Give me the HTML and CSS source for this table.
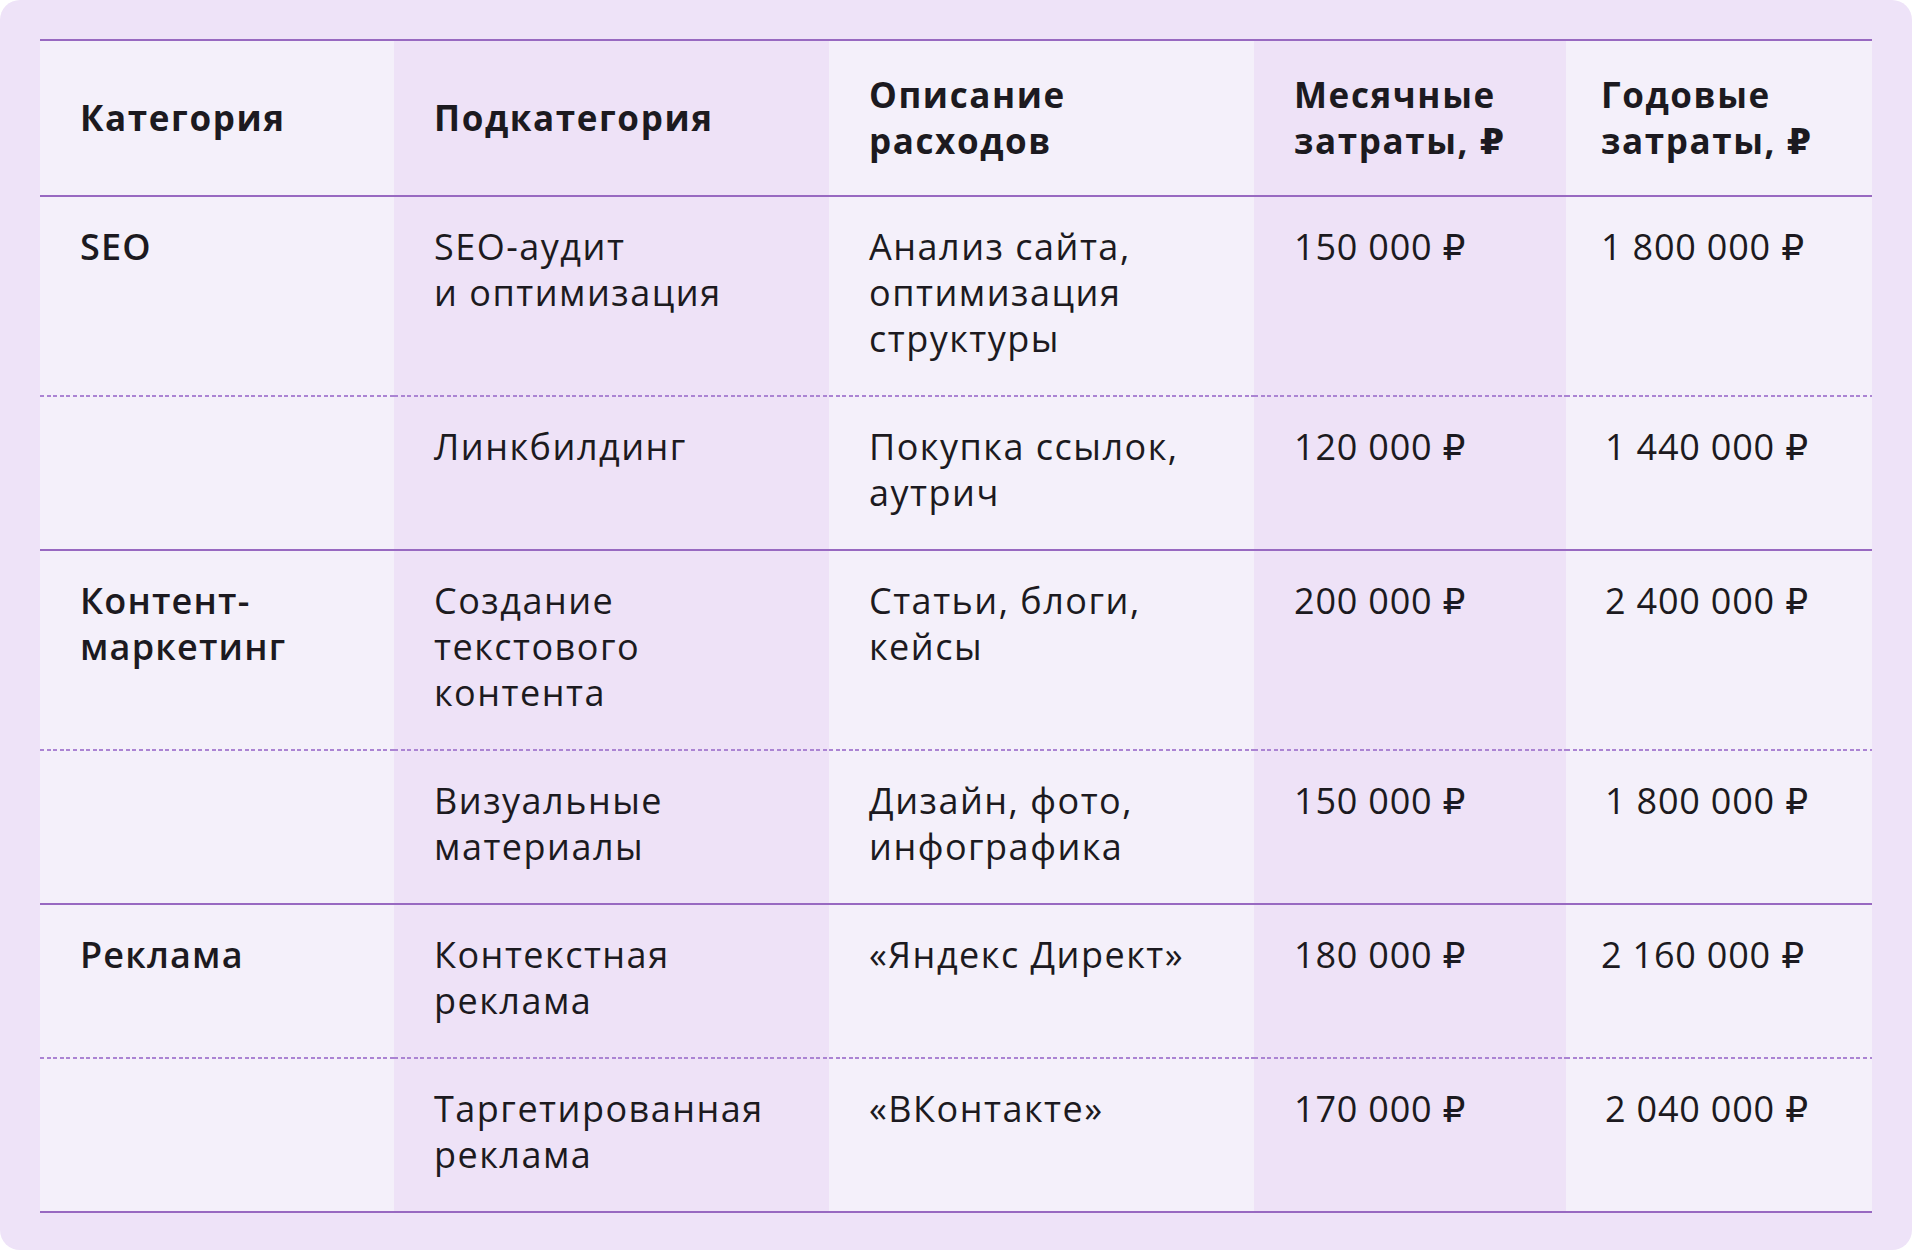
FILE: index.html
```html
<!DOCTYPE html>
<html lang="ru">
<head>
<meta charset="utf-8">
<title>Расходы</title>
<link rel="stylesheet" href="styles.css">
</head>
<body>
<div class="card">
  <div class="table">
    <div class="row head">
      <div class="cell c1">Категория</div>
      <div class="cell c2">Подкатегория</div>
      <div class="cell c3">Описание<br>расходов</div>
      <div class="cell c4">Месячные<br>затраты, ₽</div>
      <div class="cell c5">Годовые<br>затраты, ₽</div>
    </div>
    <div class="row sub">
      <div class="cell c1 cat">SEO</div>
      <div class="cell c2">SEO-аудит<br>и оптимизация</div>
      <div class="cell c3">Анализ сайта,<br>оптимизация<br>структуры</div>
      <div class="cell c4 num">150 000 ₽</div>
      <div class="cell c5 num">1 800 000 ₽</div>
    </div>
    <div class="row group">
      <div class="cell c1 cat"></div>
      <div class="cell c2">Линкбилдинг</div>
      <div class="cell c3">Покупка ссылок,<br>аутрич</div>
      <div class="cell c4 num">120 000 ₽</div>
      <div class="cell c5 num shift">1 440 000 ₽</div>
    </div>
    <div class="row sub">
      <div class="cell c1 cat">Контент-<br>маркетинг</div>
      <div class="cell c2">Создание<br>текстового<br>контента</div>
      <div class="cell c3">Статьи, блоги,<br>кейсы</div>
      <div class="cell c4 num">200 000 ₽</div>
      <div class="cell c5 num shift">2 400 000 ₽</div>
    </div>
    <div class="row group">
      <div class="cell c1 cat"></div>
      <div class="cell c2">Визуальные<br>материалы</div>
      <div class="cell c3">Дизайн, фото,<br>инфографика</div>
      <div class="cell c4 num">150 000 ₽</div>
      <div class="cell c5 num shift">1 800 000 ₽</div>
    </div>
    <div class="row sub">
      <div class="cell c1 cat">Реклама</div>
      <div class="cell c2">Контекстная<br>реклама</div>
      <div class="cell c3">«Яндекс Директ»</div>
      <div class="cell c4 num">180 000 ₽</div>
      <div class="cell c5 num">2 160 000 ₽</div>
    </div>
    <div class="row group">
      <div class="cell c1 cat"></div>
      <div class="cell c2">Таргетированная<br>реклама</div>
      <div class="cell c3">«ВКонтакте»</div>
      <div class="cell c4 num">170 000 ₽</div>
      <div class="cell c5 num shift">2 040 000 ₽</div>
    </div>
  </div>
</div>
</body>
</html>
```

FILE: styles.css
```css
html, body {
  margin: 0;
  padding: 0;
  background: #ffffff;
}

body {
  font-family: "Open Sans", "DejaVu Sans", sans-serif;
  color: #1c1a20;
}

.card {
  width: 1912px;
  height: 1250px;
  box-sizing: border-box;
  background: #eee3f8;
  border-radius: 20px;
  padding: 39px 40px 0 40px;
}

.table {
  width: 1832px;
  border-top: 2px solid #9869c1;
}

.row {
  display: grid;
  grid-template-columns: 354px 435px 425px 312px 306px;
}

.row.head {
  border-bottom: 2px solid #9869c1;
}

.row.group {
  border-bottom: 2px solid #9869c1;
}

.cell {
  font-size: 36px;
  line-height: 46px;
  letter-spacing: 1.5px;
  font-weight: 400;
  padding: 27px 10px 33px 40px;
  white-space: nowrap;
  background-color: #f4f0fa;
}

.cell.num {
  letter-spacing: 0.8px;
}

.cell.c2,
.cell.c4 {
  background-color: #eee2f7;
}

.cell.c5 {
  padding-left: 35px;
}

.cell.c5.shift {
  padding-left: 39px;
}

.row.sub .cell {
  padding-bottom: 35px;
  background-image: repeating-linear-gradient(90deg, #ab84d3 0 4px, transparent 4px 6.6px);
  background-size: 100% 2px;
  background-position: left bottom;
  background-repeat: no-repeat;
}

.row.head .cell {
  font-size: 35px;
  font-weight: 700;
  display: flex;
  align-items: center;
  letter-spacing: 1.6px;
  padding-top: 31px;
  padding-bottom: 31px;
}

.cell.cat {
  font-weight: 600;
  letter-spacing: 1.2px;
}
```
